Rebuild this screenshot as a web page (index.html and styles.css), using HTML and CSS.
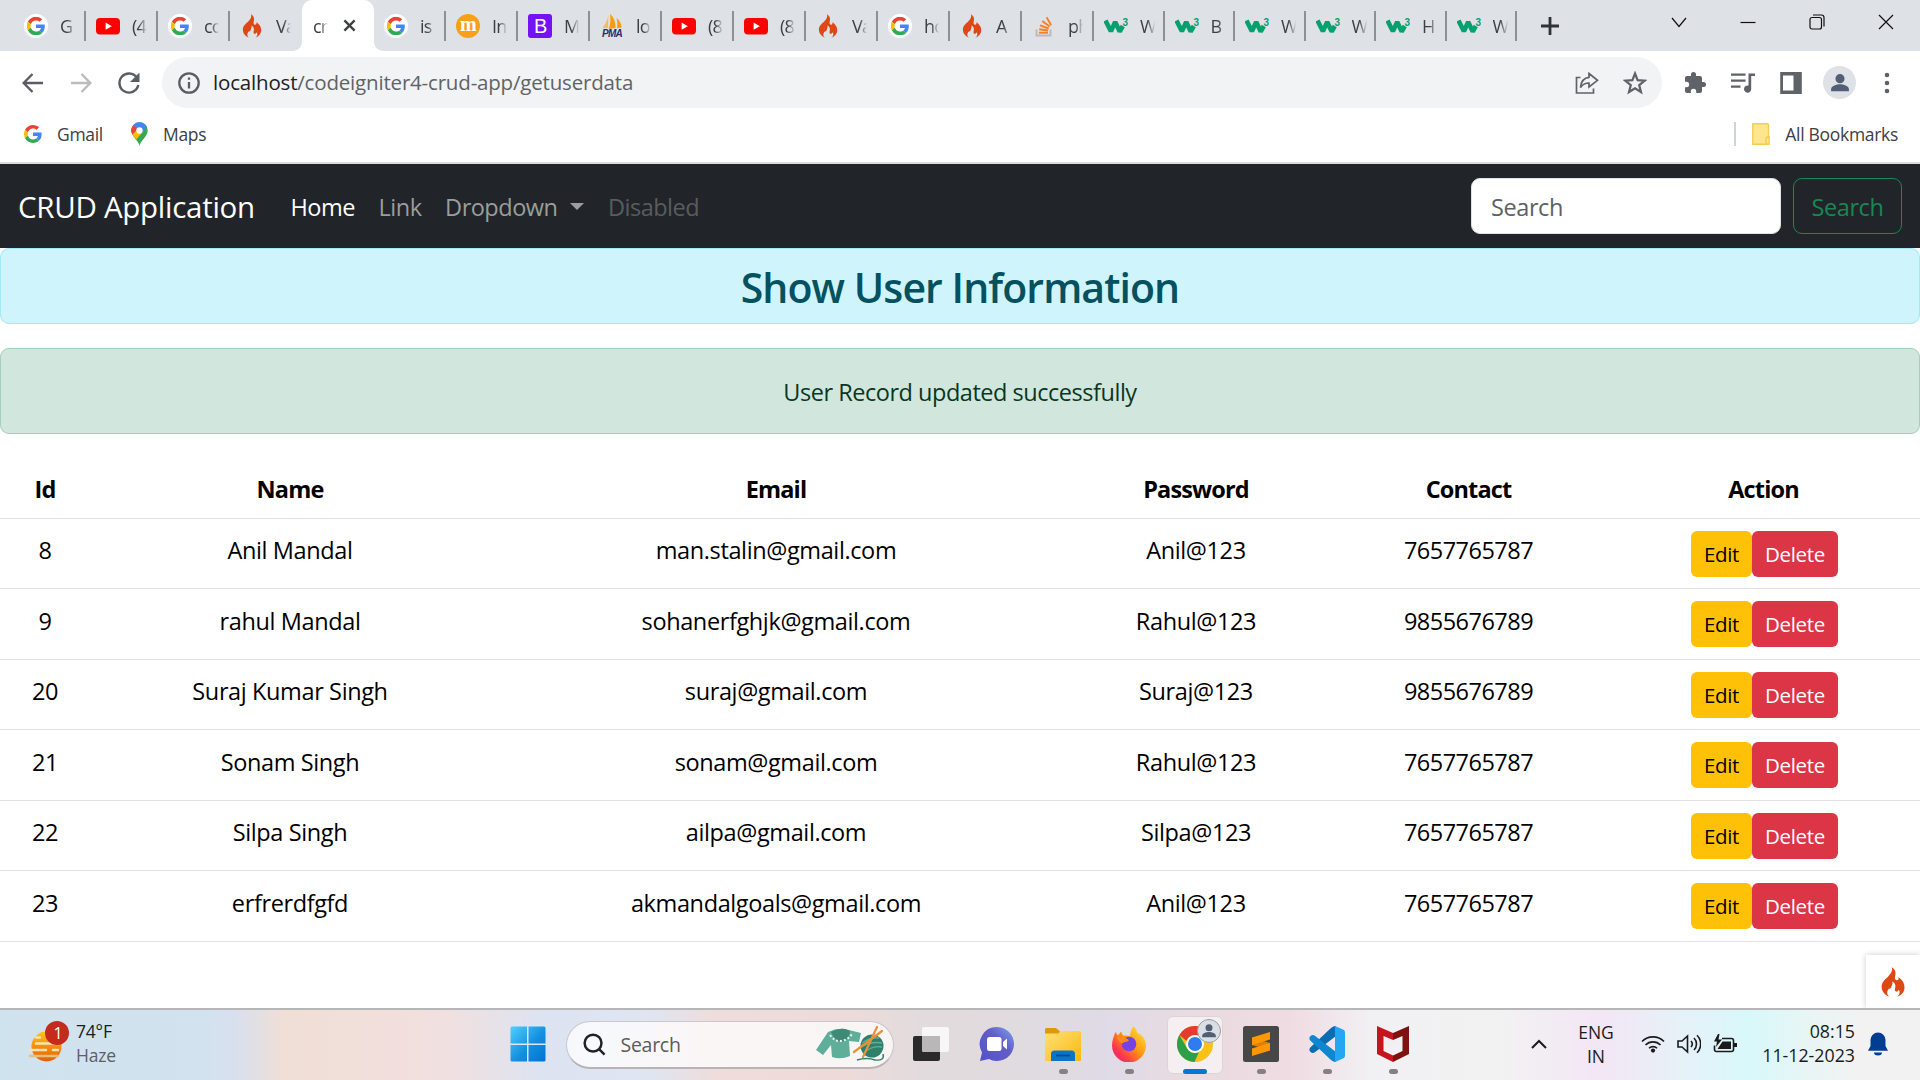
FILE: index.html
```html
<!DOCTYPE html>
<html lang="en">
<head>
<meta charset="utf-8">
<title>crud app</title>
<link rel="stylesheet" href="styles.css">
</head>
<body>
<svg class="defs" aria-hidden="true">
  <symbol id="g-plain" viewBox="0 0 48 48">
    <path fill="#EA4335" d="M24 9.5c3.54 0 6.71 1.22 9.21 3.6l6.85-6.85C35.9 2.38 30.47 0 24 0 14.62 0 6.51 5.38 2.56 13.22l7.98 6.19C12.43 13.72 17.74 9.5 24 9.5z"/>
    <path fill="#4285F4" d="M46.98 24.55c0-1.57-.15-3.09-.38-4.55H24v9.02h12.94c-.58 2.96-2.26 5.48-4.78 7.18l7.73 6c4.51-4.18 7.09-10.36 7.09-17.65z"/>
    <path fill="#FBBC05" d="M10.53 28.59c-.48-1.45-.76-2.99-.76-4.59s.27-3.14.76-4.59l-7.98-6.19C.92 16.46 0 20.12 0 24c0 3.88.92 7.54 2.56 10.78l7.97-6.19z"/>
    <path fill="#34A853" d="M24 48c6.48 0 11.93-2.13 15.89-5.81l-7.73-6c-2.15 1.45-4.92 2.3-8.16 2.3-6.26 0-11.57-4.22-13.47-9.91l-7.98 6.19C6.51 42.62 14.62 48 24 48z"/>
  </symbol>
  <symbol id="g" viewBox="0 0 24 24">
    <circle cx="12" cy="12" r="12" fill="#fff"/>
    <use href="#g-plain" x="2.8" y="2.8" width="18.4" height="18.4"/>
  </symbol>
  <symbol id="yt" viewBox="0 0 24 24">
    <rect y="4" width="24" height="16.4" rx="4" fill="#f00"/>
    <path d="M9.6 8.6v7.2l6.2-3.6z" fill="#fff"/>
  </symbol>
  <symbol id="fire" viewBox="0 0 24 30">
    <path fill="#dd4814" d="M8 29.6C3.5 27.6.5 24 .6 19.4.8 14.900 4 12.500 7.200 9.400 10 6.600 11.600 4.200 10.900.3c3.300 2.100 4.300 5.100 3.300 8.700-.6 2.300-.2 3.900 1.300 4.300 1.700.4 2.600-.9 1.900-3.200 3.800 2.700 6.200 6.200 6.100 10.300-.1 4.400-2.700 7.400-7.300 9.400 2.600-2.400 3.300-5.100 1.500-7-.7 1.500-1.700 2.100-2.700 1.800-1.600-.5-1.200-2.200-.7-4.400.4-2.300-.5-4.600-3-5.800.7 3.100-.7 4.500-2.300 6.200-2.900 3-4.100 5.900-1 9z"/>
    <path fill="#dd4814" d="M8.400 17.200c1.500.5 2.300 1.700 1.900 3.300l-2.200 1.800z"/>
  </symbol>
  <symbol id="mm" viewBox="0 0 24 24">
    <circle cx="12" cy="12" r="12" fill="#f9a01b"/>
    <text x="12" y="17.400" text-anchor="middle" font-family="Liberation Serif, serif" font-weight="700" font-size="20" fill="#fff">m</text>
  </symbol>
  <symbol id="bs" viewBox="0 0 24 24">
    <rect width="24" height="24" rx="3" fill="#7411f5"/>
    <text x="12.200" y="19" text-anchor="middle" font-family="Liberation Sans, sans-serif" font-size="20" fill="#fff">B</text>
  </symbol>
  <symbol id="pma" viewBox="0 0 24 24">
    <path d="M8.500 1 8 14H2.500C5 11 7.500 6 8.500 1z" fill="#f6b96c"/>
    <path d="M10 0c4 3 6 9 5.500 14L8.800 15c1.800-5 2-10 1.200-15z" fill="#f89c0e"/>
    <path d="M16.500 4c3 2 5 6 5.200 9.500l-4.700.8c.6-4 .4-7-.5-10.300z" fill="#f89c0e"/>
    <text x="12" y="23.400" text-anchor="middle" font-family="Liberation Sans, sans-serif" font-style="italic" font-weight="700" font-size="10" fill="#2d2b6f">PMA</text>
  </symbol>
  <symbol id="so" viewBox="0 0 24 24">
    <path d="M4.500 15.500v6h14v-6" fill="none" stroke="#bcbbbb" stroke-width="2"/>
    <g stroke="#f48024" stroke-width="1.900">
      <path d="M7 18.700h9"/><path d="M7.200 15.200l8.900 1.300"/><path d="M8 11.300l8.600 3.200"/><path d="M10.300 7l7.300 5.500"/><path d="M14.600 3.200l4.600 8"/>
    </g>
  </symbol>
  <symbol id="w3" viewBox="0 0 24 24">
    <path d="M1.500 6.500l5.400 10.800L11.200 8l4.500 9.500L18.800 12" fill="none" stroke="#04a06d" stroke-width="4.600" stroke-linejoin="bevel"/>
    <text x="18.600" y="11.500" font-family="Liberation Sans, sans-serif" font-weight="700" font-size="10" fill="#04a06d">3</text>
  </symbol>
  <symbol id="person" viewBox="0 0 24 24">
    <circle cx="12" cy="8" r="4.200"/><path d="M3.800 19.500v-1.800c0-3.200 5-4.600 8.200-4.600s8.200 1.400 8.200 4.600v1.800z"/>
  </symbol>
</svg>

<header class="tabstrip">
  <div class="tab"><svg><use href="#g"/></svg><span>G</span></div>
  <div class="tab"><svg><use href="#yt"/></svg><span>(4</span></div>
  <div class="tab"><svg><use href="#g"/></svg><span>co</span></div>
  <div class="tab no-rule"><svg><use href="#fire"/></svg><span>Va</span></div>
  <div class="tab active"><span>cr</span><svg class="close" viewBox="0 0 14 14"><path d="M1.500 1.500l11 11M12.500 1.500l-11 11"/></svg></div>
  <div class="tab"><svg><use href="#g"/></svg><span>is</span></div>
  <div class="tab"><svg><use href="#mm"/></svg><span>In</span></div>
  <div class="tab"><svg><use href="#bs"/></svg><span>M</span></div>
  <div class="tab"><svg><use href="#pma"/></svg><span>lo</span></div>
  <div class="tab"><svg><use href="#yt"/></svg><span>(8</span></div>
  <div class="tab"><svg><use href="#yt"/></svg><span>(8</span></div>
  <div class="tab"><svg><use href="#fire"/></svg><span>Va</span></div>
  <div class="tab"><svg><use href="#g"/></svg><span>ho</span></div>
  <div class="tab"><svg><use href="#fire"/></svg><span>A</span></div>
  <div class="tab"><svg><use href="#so"/></svg><span>ph</span></div>
  <div class="tab narrow"><svg><use href="#w3"/></svg><span>W</span></div>
  <div class="tab narrow"><svg><use href="#w3"/></svg><span>B</span></div>
  <div class="tab narrow"><svg><use href="#w3"/></svg><span>W</span></div>
  <div class="tab narrow"><svg><use href="#w3"/></svg><span>W</span></div>
  <div class="tab narrow"><svg><use href="#w3"/></svg><span>H</span></div>
  <div class="tab narrow"><svg><use href="#w3"/></svg><span>W</span></div>
  <svg class="newtab" viewBox="0 0 18 18"><path d="M9 0v18M0 9h18"/></svg>
  <div class="window-controls">
    <svg viewBox="0 0 16 16"><path d="M1 4l7 8.500L15 4"/></svg>
    <svg viewBox="0 0 16 16"><path d="M.5 8.500h15"/></svg>
    <svg viewBox="0 0 16 16"><rect x="1" y="3.500" width="11.500" height="11.500" rx="2"/><path d="M4 1h8.500q2.500 0 2.500 2.500V12.500"/></svg>
    <svg viewBox="0 0 16 16"><path d="M1 1l14 14M15 1L1 15"/></svg>
  </div>
</header>

<div class="toolbar">
  <svg class="nav-icon" viewBox="0 0 24 24"><path d="M22 12H3M11.500 3L2.700 12l8.800 9"/></svg>
  <svg class="nav-icon faded" viewBox="0 0 24 24"><path d="M2 12h19M12.500 3l8.800 9-8.800 9"/></svg>
  <svg class="nav-icon" viewBox="0 0 24 24"><path d="M19.800 6.600A9.500 9.500 0 1 0 21.300 14"/><path class="solid" d="M22.500 1.500v9.500H13z"/></svg>
  <div class="omnibox">
    <svg class="info" viewBox="0 0 22 22"><circle cx="11" cy="11" r="9.700"/><path d="M11 10v6.500M11 5.500v2.300"/></svg>
    <div class="url"><b>localhost</b>/codeigniter4-crud-app/getuserdata</div>
    <svg class="share" viewBox="0 0 24 24"><path d="M5.500 6.500H1.500V22h17v-4.500M14 2.500l8.500 6.800-8.500 6.700v-4c-4 0-6.500 1.500-8.500 4.500.5-5.500 3.500-9.700 8.500-10.200z"/></svg>
    <svg class="star" viewBox="0 0 24 24"><path d="M12 2.500l2.600 6.600 7.100.5-5.500 4.500 1.800 6.900-6-3.800L6 21l1.800-6.900-5.500-4.500 7.100-.5z"/></svg>
  </div>
  <svg class="action" viewBox="0 0 24 24"><path d="M20.500 11H19V7c0-1.100-.9-2-2-2h-4V3.500a2.500 2.500 0 0 0-5 0V5H4c-1.100 0-2 .9-2 2v3.800h1.500a2.700 2.700 0 0 1 0 5.400H2V20c0 1.100.9 2 2 2h3.800v-1.500a2.700 2.700 0 0 1 5.400 0V22H17c1.100 0 2-.9 2-2v-4h1.500a2.500 2.500 0 0 0 0-5z"/></svg>
  <svg class="action" viewBox="0 0 24 24"><path d="M0 2.500h14.500v2.300H0zM0 8.500h14.500v2.300H0zM0 14.500h9.500v2.300H0zM17.500 2.500H24v2.600h-3.800V18a3.600 3.600 0 1 1-2.700-3.400z"/></svg>
  <svg class="action" viewBox="0 0 24 24"><path fill-rule="evenodd" d="M1.200 1h21.600v22H1.200zM4 4.500v15h10.500v-15z"/></svg>
  <div class="avatar"><svg><use href="#person"/></svg></div>
  <svg class="kebab" viewBox="0 0 6 22"><circle cx="3" cy="3" r="2.300"/><circle cx="3" cy="11" r="2.300"/><circle cx="3" cy="19" r="2.300"/></svg>
</div>

<div class="bookmarks">
  <svg class="bm-g"><use href="#g-plain"/></svg><span class="gmail">Gmail</span>
  <svg class="pin" viewBox="0 0 17 24">
    <path d="M8.500 24C8 19 .3 14.500.3 8.500a8.200 8.200 0 0 1 16.400 0C16.700 14.500 9 19 8.500 24z" fill="#34a853"/>
    <path d="M2.200 3.200A8.200 8.200 0 0 1 15.800 4.700L6 16.400 2.800 13z" fill="#4285f4"/>
    <path d="M2.200 3.200L7 7.500 1.600 12.700A8 8 0 0 1 2.200 3.200z" fill="#ea4335"/>
    <path d="M1.400 12.400L6 8l5 2.700-5.700 6.800z" fill="#fbbc04"/>
    <circle cx="8.500" cy="8.500" r="3.200" fill="#fff"/>
  </svg><span>Maps</span>
  <i class="bm-rule"></i>
  <svg class="folder" viewBox="0 0 18 22"><path d="M.8.800h14.700q1 0 1 1V14h.7v7.200H.8z" fill="#ffe58f" stroke="#f2cc54" stroke-width="1.400"/><path d="M14 21v-5.500q0-1.500 1.500-1.500h1.700" fill="none" stroke="#f2cc54" stroke-width="1.400"/></svg>
  <span>All Bookmarks</span>
</div>

<nav class="navbar">
  <a class="brand">CRUD Application</a>
  <a class="link current">Home</a>
  <a class="link">Link</a>
  <a class="link dropdown">Dropdown</a>
  <a class="link disabled">Disabled</a>
  <form class="search-form">
    <div class="search-input">Search</div>
    <div class="search-btn">Search</div>
  </form>
</nav>

<main class="page">
  <h1 class="alert info-alert">Show User Information</h1>
  <div class="alert success-alert">User Record updated successfully</div>
  <table class="users">
    <colgroup><col class="c-id"><col class="c-name"><col class="c-email"><col class="c-pass"><col class="c-contact"><col></colgroup>
    <thead><tr><th>Id</th><th>Name</th><th>Email</th><th>Password</th><th>Contact</th><th>Action</th></tr></thead>
    <tbody>
      <tr><td>8</td><td>Anil Mandal</td><td>man.stalin@gmail.com</td><td>Anil@123</td><td class="num">7657765787</td><td><div class="btns"><a class="btn edit">Edit</a><a class="btn delete">Delete</a></div></td></tr>
      <tr><td>9</td><td>rahul Mandal</td><td>sohanerfghjk@gmail.com</td><td>Rahul@123</td><td class="num">9855676789</td><td><div class="btns"><a class="btn edit">Edit</a><a class="btn delete">Delete</a></div></td></tr>
      <tr><td>20</td><td>Suraj Kumar Singh</td><td>suraj@gmail.com</td><td>Suraj@123</td><td class="num">9855676789</td><td><div class="btns"><a class="btn edit">Edit</a><a class="btn delete">Delete</a></div></td></tr>
      <tr><td>21</td><td>Sonam Singh</td><td>sonam@gmail.com</td><td>Rahul@123</td><td class="num">7657765787</td><td><div class="btns"><a class="btn edit">Edit</a><a class="btn delete">Delete</a></div></td></tr>
      <tr><td>22</td><td>Silpa Singh</td><td>ailpa@gmail.com</td><td>Silpa@123</td><td class="num">7657765787</td><td><div class="btns"><a class="btn edit">Edit</a><a class="btn delete">Delete</a></div></td></tr>
      <tr><td>23</td><td>erfrerdfgfd</td><td>akmandalgoals@gmail.com</td><td>Anil@123</td><td class="num">7657765787</td><td><div class="btns"><a class="btn edit">Edit</a><a class="btn delete">Delete</a></div></td></tr>
    </tbody>
  </table>
  <div class="debug-toggle"><svg><use href="#fire"/></svg></div>
</main>

<footer class="taskbar">
  <div class="weather">
    <svg viewBox="0 0 42 42">
      <defs><linearGradient id="sun" x1="0" y1="0" x2="0" y2="1"><stop offset="0" stop-color="#ffc414"/><stop offset="1" stop-color="#e85a08"/></linearGradient></defs>
      <circle cx="18.500" cy="25.500" r="15" fill="url(#sun)"/>
      <g stroke="#fbe3b0" stroke-width="2.600" stroke-linecap="round"><path d="M8 16.500h4M8 22.500h20M2 29h16M25 29h5"/><path d="M2 35h28" stroke="#e6c07a"/></g>
      <circle cx="29" cy="12" r="12" fill="#c42b1c"/>
      <text x="30" y="17.500" text-anchor="middle" font-family="Open Sans, sans-serif" font-size="16" fill="#fff">1</text>
    </svg>
    <div><p>74°F</p><p class="dim">Haze</p></div>
  </div>
  <div class="slot">
    <svg class="app" viewBox="0 0 36 36"><defs><linearGradient id="win" x1="0" y1="0" x2="1" y2="1"><stop offset="0" stop-color="#4fd0ff"/><stop offset=".55" stop-color="#1490df"/><stop offset="1" stop-color="#0072d4"/></linearGradient></defs><path d="M2 .500h15v17H.5V2Q.5.500 2 .500zM18.500.500H34q1.500 0 1.500 1.500v15.500h-17zM.5 19H17v16.500H2Q.5 35.500.5 34zM18.500 19h17v15q0 1.500-1.500 1.500H18.500z" fill="url(#win)"/></svg>
  </div>
  <div class="tb-search">
    <svg class="mag" viewBox="0 0 24 24"><circle cx="10.500" cy="10.500" r="8.800"/><path d="M17 17l5.500 5.500"/></svg>
    <span>Search</span>
    <svg class="knit" viewBox="0 0 70 36">
      <path d="M13 6q8-4 17-3l16 4-2 9-10-1 1 15q-9 4-18 1l-1-12-8 10-7-5z" fill="#5fae9a"/>
      <path d="M16 6q4 9 10 10 8-1 9-11l-5-2q-7-1-14 3z" fill="#3f8a77"/>
      <path d="M15 9q5 7 11 6 7-1 11-7" fill="none" stroke="#e8f4ee" stroke-width="2" stroke-dasharray="2 2"/>
      <circle cx="57" cy="20" r="11.500" fill="#2f806b"/>
      <path d="M47 17q8-6 17-5M46 21q10-6 21-4M49 27q8-8 18-6" fill="none" stroke="#5fae9a" stroke-width="1.300"/>
      <path d="M39 26L67 5M48 31L62 1" stroke="#e8913a" stroke-width="2.200" stroke-linecap="round"/>
      <path d="M42 34q10-3 18 0 10 1 8-6" fill="none" stroke="#2f806b" stroke-width="1.500"/>
    </svg>
  </div>
  <div class="slot">
    <svg class="app" viewBox="0 0 36 36"><rect x="0" y="10" width="27" height="25" rx="2" fill="#2b2a2a"/><rect x="9" y="1" width="27" height="25" rx="2" fill="#f7f7f7"/><path d="M9 10h18v16H11q-2 0-2-2z" fill="#b9b7b8"/></svg>
  </div>
  <div class="slot">
    <svg class="app" viewBox="0 0 36 36"><defs><linearGradient id="chat" x1="0" y1="1" x2="1" y2="0"><stop offset="0" stop-color="#5451c8"/><stop offset=".6" stop-color="#625fc9"/><stop offset="1" stop-color="#7da6f0"/></linearGradient></defs><path d="M18 1a17 17 0 1 1-8 32L1 35l2-8.500A17 17 0 0 1 18 1z" fill="url(#chat)"/><rect x="8" y="11" width="14.500" height="14" rx="2.500" fill="#fff"/><path d="M24 16l4-3.500v11L24 20z" fill="#fff"/></svg>
  </div>
  <div class="slot running">
    <svg class="app" viewBox="0 0 36 36"><defs><linearGradient id="fold" x1="0" y1="0" x2="1" y2="1"><stop offset="0" stop-color="#ffe07a"/><stop offset="1" stop-color="#fbb90c"/></linearGradient></defs><path d="M0 3.500Q0 2 1.500 2H11l4 3.500V12H0z" fill="#dc9a08"/><path d="M0 7.500h13l3-2.500h18.500q1.500 0 1.500 1.500V34q0 1-1 1H0z" fill="url(#fold)"/><path d="M6 35v-7q0-3.500 3.500-3.500h17q3.500 0 3.500 3.500v7z" fill="#0b74c8"/><path d="M11 29.500h14" stroke="#064f8f" stroke-width="1.800"/></svg>
  </div>
  <div class="slot running">
    <svg class="app" viewBox="0 0 36 36"><defs><linearGradient id="ff" x1="1" y1="0" x2="0" y2="1"><stop offset="0" stop-color="#fff14f"/><stop offset=".45" stop-color="#ff980e"/><stop offset=".75" stop-color="#ff3750"/><stop offset="1" stop-color="#e31587"/></linearGradient></defs><path d="M22.500.3c2.500 2 3.200 4 3.500 6.200 5 2 9 7 9 13A17 17 0 0 1 1 19.500C1 14 3 10 4.500 6L7 9.500l3-4 2 4h4l3 .5C19.500 6 20.500 2.500 22.500.3z" fill="url(#ff)"/><circle cx="18" cy="18" r="7.300" fill="#7542e5"/><path d="M5.500 11c5-2 9 0 12.500 3.200-2 2.300-5.500 1.500-6.500 3.300C8.500 16 6.500 14 5.500 11z" fill="#ff8b16"/></svg>
  </div>
  <div class="slot running focused">
    <svg class="app" viewBox="0 0 36 36"><circle cx="18" cy="18" r="18" fill="#fbc116"/><path d="M2.400 9A18 18 0 0 1 33.600 9H18a9 9 0 0 0-8.500 6z" fill="#e33b2e"/><path d="M2.400 9L10.200 22.500A9 9 0 0 0 18 27l4-1-4.500 10A18 18 0 0 1 2.400 9z" fill="#2c9f4b"/><circle cx="18" cy="18" r="9" fill="#fff"/><circle cx="18" cy="18" r="7" fill="#2f7bf0"/></svg>
    <div class="profile-badge"><svg><use href="#person"/></svg></div>
  </div>
  <div class="slot running">
    <svg class="app" viewBox="0 0 36 36"><rect width="36" height="36" rx="2.500" fill="#474747"/><path d="M9 19l18 5.500V17L9 11.500z" fill="#e07f00"/><path d="M27 6v7.500L9 19v-7.500zM27 17v7.500L9 30v-7.500z" fill="#ff9800"/></svg>
  </div>
  <div class="slot running">
    <svg class="app" viewBox="0 0 36 36"><path d="M27 0v10L5.500 26.500q-2 1.200-4-.6-2.300-2.400 0-4.700L22 2q2-2 5-2z" fill="#0a6cb3"/><path d="M27 36V26L5.500 9.500q-2-1.200-4 .6-2.300 2.400 0 4.700L22 34q2 2 5 2z" fill="#0e86d0"/><path d="M26 0l8.500 3.800q1.500.8 1.500 2.400v23.600q0 1.600-1.500 2.400L26 36z" fill="#24a6f2"/></svg>
  </div>
  <div class="slot running">
    <svg class="app" viewBox="0 0 36 36"><path d="M2 0l16 7v7l-9.500-4v15L18 29.500V36L2 28z" fill="#c4161c"/><path d="M34 0L18 7v7l9.500-4v15L18 29.500V36l16-8z" fill="#7e1210"/></svg>
  </div>
  <div class="tray">
    <svg class="chev" viewBox="0 0 16 10"><path d="M1 9l7-7 7 7"/></svg>
    <div class="lang"><p>ENG</p><p>IN</p></div>
    <svg class="wifi" viewBox="0 0 24 18"><path d="M1 6.500a15.500 15.500 0 0 1 22 0M4.500 10a10.600 10.600 0 0 1 15 0M8 13.300a5.700 5.700 0 0 1 8 0"/><circle cx="12" cy="15.600" r="2.100"/></svg>
    <svg class="vol" viewBox="0 0 24 20"><path d="M1 7h4l5.500-5v16L5 13H1zM14 7a4.500 4.500 0 0 1 0 6M17 4a8.500 8.500 0 0 1 0 12M20 1.200a12.500 12.500 0 0 1 0 17.600"/></svg>
    <svg class="bat" viewBox="0 0 24 20"><path d="M9 4.500h9.500q2 0 2 2v9q0 2-2 2h-15q-2 0-2-2v-4"/><path class="fill" d="M9.500 7.500h8.500v7.500H4.500zM21 9h3v4h-3zM5 0L1 7.500h3L3 13l6-7.500H5.500L6.500 0z"/></svg>
    <div class="clock"><p>08:15</p><p>11-12-2023</p></div>
    <svg class="bell" viewBox="0 0 20 24"><path d="M10 .500a7.500 7.500 0 0 1 7.500 7.500v6l2.500 4.700H0L2.500 14V8A7.500 7.500 0 0 1 10 .500zM6 20.500h8a4 3 0 0 1-8 0z"/></svg>
  </div>
</footer>
</body>
</html>
```
FILE: styles.css
```css
* { box-sizing: border-box; }
body {
  margin: 0;
  width: 1920px;
  height: 1080px;
  overflow: hidden;
  display: flex;
  flex-direction: column;
  background: #fff;
  color: #000;
  font-family: "Open Sans", "Noto Sans", sans-serif;
  font-size: 23.5px;
  letter-spacing: -0.42px;
}
p { margin: 0; }
svg { display: block; flex: none; }
.defs { display: none; }

/* tab strip */
.tabstrip {
  height: 51px;
  flex: none;
  display: flex;
  align-items: center;
  padding-left: 14px;
  background: #dee1e6;
  font-size: 18px;
  letter-spacing: -0.8px;
  color: #3c4043;
}
.tab {
  width: 72px;
  height: 30px;
  flex: none;
  display: flex;
  align-items: center;
  padding-left: 10px;
  border-right: 2px solid #8d9095;
}
.tab.narrow { width: 70.5px; }
.tab.no-rule { border-color: transparent; }
.tab > svg { width: 24px; height: 24px; }
.tab span {
  width: 16px;
  margin-left: 12px;
  overflow: hidden;
  white-space: nowrap;
  -webkit-mask-image: linear-gradient(90deg, #000 45%, transparent 95%);
  mask-image: linear-gradient(90deg, #000 45%, transparent 95%);
}
.tab.active {
  position: relative;
  height: 51px;
  padding-left: 11px;
  border: 0;
  border-radius: 10px 10px 0 0;
  background: #fff;
}
.tab.active::before, .tab.active::after {
  content: "";
  position: absolute;
  bottom: 0;
  width: 9px;
  height: 9px;
}
.tab.active::before { left: -9px; background: radial-gradient(circle at 0 0, #dee1e6 8.5px, #fff 9px); }
.tab.active::after { right: -9px; background: radial-gradient(circle at 100% 0, #dee1e6 8.5px, #fff 9px); }
.tab.active span { margin: 0; }
.tab > .close { width: 13px; height: 13px; margin-left: 14px; fill: none; stroke: #3c4043; stroke-width: 2.5; }
.newtab { width: 18px; height: 18px; margin-left: 24px; stroke: #303336; stroke-width: 2.8; }
.window-controls {
  display: flex;
  gap: 53px;
  margin: -8px 26px 0 auto;
}
.window-controls svg { width: 16px; height: 16px; fill: none; stroke: #111; stroke-width: 1.2; }

/* address bar */
.toolbar {
  height: 63px;
  flex: none;
  display: flex;
  align-items: center;
  padding-left: 21px;
}
.nav-icon { width: 24px; height: 24px; margin-right: 24px; fill: none; stroke: #5a5e63; stroke-width: 2.4; }
.nav-icon .solid { fill: #5a5e63; stroke: none; }
.faded { stroke: #babcbe; }
.omnibox {
  width: 1500px;
  height: 51px;
  display: flex;
  align-items: center;
  margin-left: -3px;
  margin-right: 21px;
  padding: 0 15px 0 16px;
  border-radius: 26px;
  background: #f1f3f4;
}
.info { width: 22px; height: 22px; fill: none; stroke: #5a5e63; stroke-width: 2.3; }
.url { flex: 1; margin-left: 13px; padding-bottom: 2px; font-size: 20.5px; letter-spacing: -0.18px; color: #5f6368; }
.url b { font-weight: 400; color: #202124; }
.share { width: 24px; height: 24px; fill: none; stroke: #5f6368; stroke-width: 1.7; margin-right: 24px; }
.star { width: 24px; height: 24px; fill: none; stroke: #5f6368; stroke-width: 2.2; }
.action { width: 24px; height: 24px; margin-right: 24px; fill: #5f6368; }
.avatar {
  width: 33px;
  height: 33px;
  display: grid;
  place-items: center;
  margin-left: -4px;
  border-radius: 50%;
  background: #dee1e6;
}
.avatar svg { width: 26px; height: 26px; fill: #515e74; }
.kebab { width: 6px; height: 22px; margin-left: 28px; fill: #5f6368; }

/* bookmarks */
.bookmarks {
  height: 50px;
  flex: none;
  display: flex;
  align-items: center;
  padding: 0 22px 8px 24px;
  border-bottom: 2px solid #dadce0;
  font-size: 17.5px;
  letter-spacing: -0.3px;
  color: #3c4043;
}
.bm-g { width: 18px; height: 18px; }
.bookmarks span { margin-left: 15px; }
.bookmarks .gmail { margin-right: 28px; }
.pin { width: 17px; height: 24px; }
.bm-rule { width: 2px; height: 24px; margin-left: auto; background: #cfd2d6; }
.folder { width: 18px; height: 22px; margin-left: 16px; }

/* application navbar */
.navbar {
  height: 84px;
  flex: none;
  display: flex;
  align-items: center;
  padding: 0 18px;
  background: #212529;
  color: #9b9d9e;
}
.brand { width: 272.5px; color: #fff; font-size: 29.5px; letter-spacing: -0.28px; }
.link { margin: 2px 23.6px 0 0; letter-spacing: -0.5px; }
.current { color: #fff; }
.dropdown { display: flex; align-items: center; }
.dropdown::after {
  content: "";
  margin-left: 13px;
  margin-top: -2px;
  border: 7px solid transparent;
  border-top-color: #9b9d9e;
  border-bottom: 0;
}
.disabled { color: #595c5f; }
.search-form { display: flex; gap: 12px; margin-left: auto; }
.search-input {
  width: 310px;
  height: 56px;
  padding: 0 19px;
  line-height: 57px;
  border: 1px solid #dee2e6;
  border-radius: 9px;
  background: #fff;
  color: #5c6167;
}
.search-btn {
  width: 109px;
  height: 56px;
  line-height: 57px;
  text-align: center;
  border: 1px solid #198754;
  border-radius: 9px;
  color: #198754;
}

/* page */
.page { position: relative; height: 760px; flex: none; }
.alert { margin: 0 0 24px; border: 1px solid; border-radius: 9px; text-align: center; }
.info-alert {
  height: 76px;
  line-height: 76px;
  background: #cff4fc;
  border-color: #9eeaf9;
  color: #055160;
  font-size: 41px;
  font-weight: 600;
  letter-spacing: -0.92px;
}
.success-alert {
  height: 86px;
  line-height: 86px;
  background: #d1e7dd;
  border-color: #a3cfbb;
  color: #0a3622;
  letter-spacing: -0.47px;
}
.users { width: 1920px; table-layout: fixed; border-collapse: collapse; text-align: center; }
.c-id { width: 90px; }
.c-name { width: 400px; }
.c-email { width: 572px; }
.c-pass { width: 268px; }
.c-contact { width: 277px; }
.users th { height: 60px; padding: 3px 0 0; font-weight: 700; letter-spacing: -0.85px; border-bottom: 1px solid #dee2e6; }
.users td { height: 70.5px; padding: 0 0 6px; letter-spacing: -0.38px; border-bottom: 1px solid #dee2e6; }
.users td:last-child { padding: 1px 0 0 2px; }
.users .num { letter-spacing: -0.52px; }
.btns { display: flex; justify-content: center; }
.btn { height: 46px; line-height: 46px; border-radius: 6px; font-size: 20.5px; letter-spacing: -0.3px; }
.edit { width: 61px; background: #ffc107; color: #000; }
.delete { width: 86px; background: #dc3545; color: #fff; }
.debug-toggle {
  position: absolute;
  right: 0;
  bottom: 0;
  width: 54px;
  height: 53px;
  display: grid;
  place-items: center;
  background: #fff;
  box-shadow: 0 0 6px rgba(0, 0, 0, 0.2);
}
.debug-toggle svg { width: 24px; height: 30px; }

/* taskbar */
.taskbar {
  height: 72px;
  flex: none;
  position: relative;
  display: flex;
  align-items: center;
  border-top: 2px solid #b6b6b9;
  background: linear-gradient(90deg, #cfe3ee 0, #d2e2ef 200px, #d8e0ee 235px, #f0dfd6 285px, #f2dfdd 400px, #f0e0e0 450px, #dde4f1 540px, #dfe5f1 650px, #f0dcda 720px, #eedbd9 840px, #e2dbdd 920px, #e0dbe0 1050px, #dfdbe7 1110px, #e8dbe1 1180px, #efdce2 1290px, #f1f0f3 1370px, #f2f2f2 1500px, #f3e6f5 1600px, #e6f1f8 1680px, #d8f8fa 1750px, #e9f5f5 1810px, #f2f2f2 1860px);
  color: #1b1b1b;
  font-size: 17.5px;
  letter-spacing: 0;
}
.weather { width: 466px; display: flex; padding-left: 28px; }
.weather svg { width: 42px; height: 42px; margin-top: -2px; }
.weather p { line-height: 24px; margin-left: 6px; letter-spacing: -0.2px; }
.weather div { margin-top: -4px; }
.weather .dim { color: #5b6068; }
.slot {
  position: relative;
  width: 66px;
  height: 58px;
  flex: none;
  display: grid;
  place-items: center;
}
.weather + .slot { margin-left: 28.5px; }
.app { width: 36px; height: 36px; margin-top: -2px; }
.running::after {
  content: "";
  position: absolute;
  left: 29px;
  bottom: 0;
  width: 9px;
  height: 5px;
  border-radius: 3px;
  background: #858082;
}
.focused::before {
  content: "";
  position: absolute;
  inset: 0 5px;
  border: 1px solid #ddd4d8;
  border-radius: 6px;
  background: #f5eff1;
}
.focused .app { position: relative; }
.focused::after { left: 21px; width: 24px; background: #0078d4; }
.profile-badge {
  position: absolute;
  left: 35px;
  top: 3px;
  width: 24px;
  height: 24px;
  display: grid;
  place-items: center;
  border: 1px solid #9a9da1;
  border-radius: 50%;
  background: #dadfe5;
}
.profile-badge svg { width: 20px; height: 20px; fill: #515e74; }
.tb-search {
  width: 328px;
  height: 48px;
  display: flex;
  align-items: center;
  margin: -1px 4px 0 5px;
  padding: 0 8px 0 16px;
  border: 1px solid #c9c8cf;
  border-bottom: 2px solid #b9b2b7;
  border-radius: 24px;
  background: linear-gradient(90deg, #f6f9fc, #fbf6f6 50%, #faf5f5);
  color: #5c5c5c;
  font-size: 19.5px;
  letter-spacing: -0.28px;
}
.mag { width: 23px; height: 23px; fill: none; stroke: #222; stroke-width: 2.6; }
.tb-search span { margin-left: 15px; }
.knit { width: 70px; height: 36px; margin-left: auto; }
.tray { flex: 1; display: flex; align-items: center; justify-content: flex-end; padding: 0 32px 2px 0; text-align: center; }
.tray p { line-height: 24px; }
.tray svg { fill: none; stroke: #1b1b1b; stroke-width: 1.6; }
.chev { width: 16px; height: 10px; margin-right: 26px; }
.tray .chev { stroke-width: 2; }
.lang { width: 46px; margin-right: 22px; }
.wifi { width: 24px; height: 18px; }
.tray .wifi circle, .bat .fill { fill: #1b1b1b; stroke: none; }
.vol { width: 24px; height: 20px; margin: 0 12px; }
.bat { width: 24px; height: 20px; }
.clock { width: 106px; margin: -2px 13px 0 12px; text-align: right; font-size: 17.8px; }
.bell { width: 20px; height: 24px; }
.tray .bell { fill: #003e92; stroke: none; }
```
